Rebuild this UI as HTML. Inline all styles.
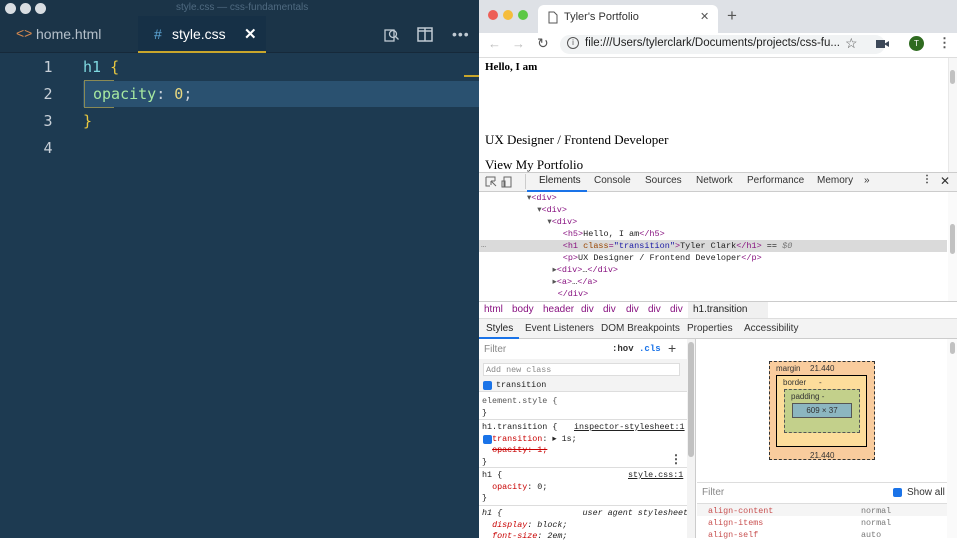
<!DOCTYPE html><html><head><meta charset="utf-8"><style>
*{margin:0;padding:0;box-sizing:border-box}
body{width:957px;height:538px;overflow:hidden;position:relative;font-family:"Liberation Sans",sans-serif;background:#fff}
.a{position:absolute}
.mono{font-family:"Liberation Mono",monospace}
#ed{left:0;top:0;width:479px;height:538px;background:#1d3a51}
.ln{color:#c8d0d8;font-size:15px;left:38px;width:20px;text-align:center}
.code{font-size:15px;font-family:"DejaVu Sans Mono",monospace}
.dt{font-size:8.5px;font-family:"Liberation Mono",monospace;color:#222;white-space:pre}
.ar{color:#555}
.tag{color:#881280}.at{color:#994500}.av{color:#1a1aa6}
.sm{font-size:10px;color:#333}
.st{font-size:8.4px;font-family:"Liberation Mono",monospace;white-space:pre;color:#222}
.pr{color:#c80000}
.bc{position:absolute;top:304px;font-size:10px;color:#881280}
</style></head><body>
<div id="ed" class="a">
 <div class="a" style="left:0;top:0;width:479px;height:16px;background:#1b3448"></div>
 <div class="a" style="left:5px;top:3px;width:11px;height:11px;border-radius:50%;background:#d8dde2"></div>
 <div class="a" style="left:20px;top:3px;width:11px;height:11px;border-radius:50%;background:#d8dde2"></div>
 <div class="a" style="left:35px;top:3px;width:11px;height:11px;border-radius:50%;background:#d8dde2"></div>
 <div class="a" style="left:176px;top:2px;font-size:10px;color:#4f6a80">style.css — css-fundamentals</div>
 <div class="a" style="left:0;top:16px;width:479px;height:37px;background:#1b3448;border-bottom:1px solid #16293a"></div>
 <div class="a" style="left:16px;top:25px;font-size:14px;color:#d88a50">&lt;&gt;</div>
 <div class="a" style="left:36px;top:26px;font-size:14px;color:#b5c0ca">home.html</div>
 <div class="a" style="left:138px;top:16px;width:128px;height:37px;background:#163046;border-bottom:2px solid #c9a62b"></div>
 <div class="a" style="left:154px;top:26px;font-size:14px;color:#5fa8d8">#</div>
 <div class="a" style="left:172px;top:26px;font-size:14px;color:#fff">style.css</div>
 <div class="a" style="left:244px;top:25px;font-size:15px;color:#fff;font-weight:bold">✕</div>
 <svg class="a" style="left:384px;top:27px" width="16" height="16" viewBox="0 0 16 16" fill="none" stroke="#c0cad3" stroke-width="1.3"><rect x="1" y="3" width="9" height="11"/><circle cx="9" cy="7" r="3.5"/><path d="M11.5 9.5l3 3"/></svg>
 <svg class="a" style="left:417px;top:27px" width="16" height="15" viewBox="0 0 16 15" fill="none" stroke="#c0cad3" stroke-width="1.5"><rect x="1" y="1" width="14" height="13"/><path d="M8 1v13M1 4h14"/></svg>
 <div class="a" style="left:452px;top:26px;font-size:14px;color:#c0cad3;letter-spacing:1px">•••</div>
 <div class="a" style="left:83px;top:81px;width:396px;height:26px;background:#2a5170"></div>
 <div class="a" style="left:84px;top:80px;width:30px;height:28px;border-left:1px solid #8a8a55;border-top:1px solid #8a8a55;border-bottom:1px solid #8a8a55"></div>
 <div class="a" style="left:464px;top:75px;width:15px;height:2px;background:#c9a62b"></div>
 <div class="a ln code" style="top:58px">1</div>
 <div class="a ln code" style="top:85px">2</div>
 <div class="a ln code" style="top:112px">3</div>
 <div class="a ln code" style="top:139px">4</div>
 <div class="a code" style="left:83px;top:58px;color:#7fd8e0">h1 <span style="color:#e8c840">{</span></div>
 <div class="a code" style="left:93px;top:85px;color:#a6e8a0">opacity<span style="color:#c8d0d8">:</span> <span style="color:#e8d880">0</span><span style="color:#c8d0d8">;</span></div>
 <div class="a code" style="left:83px;top:112px;color:#e8c840">}</div>
</div>
<!-- chrome -->
<div class="a" style="left:479px;top:0;width:478px;height:33px;background:#dee1e6"></div>
<div class="a" style="left:488px;top:10px;width:10px;height:10px;border-radius:50%;background:#ed5f57"></div>
<div class="a" style="left:503px;top:10px;width:10px;height:10px;border-radius:50%;background:#f5bd3c"></div>
<div class="a" style="left:518px;top:10px;width:10px;height:10px;border-radius:50%;background:#5cc845"></div>
<div class="a" style="left:538px;top:5px;width:180px;height:28px;background:#fff;border-radius:6px 6px 0 0"></div>
<svg class="a" style="left:548px;top:11px" width="10" height="13" viewBox="0 0 10 13" fill="none" stroke="#555"><path d="M1 1h5l3 3v8H1z"/></svg>
<div class="a" style="left:564px;top:11px;font-size:11px;color:#333">Tyler's Portfolio</div>
<div class="a" style="left:700px;top:10px;font-size:11px;color:#555">✕</div>
<div class="a" style="left:727px;top:6px;font-size:17px;color:#555">+</div>
<div class="a" style="left:479px;top:33px;width:478px;height:25px;background:#fff;border-bottom:1px solid #ddd"></div>
<div class="a" style="left:488px;top:36px;font-size:13px;color:#bbb">←</div>
<div class="a" style="left:512px;top:36px;font-size:13px;color:#bbb">→</div>
<div class="a" style="left:537px;top:35px;font-size:14px;color:#555">↻</div>
<div class="a" style="left:560px;top:35px;width:325px;height:19px;border-radius:10px;background:#f1f3f4"></div>
<div class="a" style="left:567px;top:37px;width:12px;height:12px;border:1.3px solid #555;border-radius:50%;font-size:8px;text-align:center;line-height:10px;color:#555">i</div>
<div class="a" style="left:585px;top:37px;font-size:11.5px;color:#222">file:///Users/tylerclark/Documents/projects/css-fu...</div>
<div class="a" style="left:845px;top:35px;font-size:14px;color:#555">☆</div>
<div class="a" style="left:876px;top:40px;width:9px;height:8px;background:#3c4858"></div>
<div class="a" style="left:884px;top:41px;border-right:5px solid #3c4858;border-top:3px solid transparent;border-bottom:3px solid transparent"></div>
<div class="a" style="left:909px;top:36px;width:15px;height:15px;border-radius:50%;background:#2f6b20;color:#fff;font-size:8px;text-align:center;line-height:15px">T</div>
<div class="a" style="left:938px;top:35px;font-size:13px;color:#555;font-weight:bold">⋮</div>
<div class="a" style="left:485px;top:61px;font-family:'Liberation Serif',serif;font-weight:bold;font-size:11px">Hello, I am</div>
<div class="a" style="left:485px;top:132px;font-family:'Liberation Serif',serif;font-size:13px">UX Designer / Frontend Developer</div>
<div class="a" style="left:485px;top:157px;font-family:'Liberation Serif',serif;font-size:13px">View My Portfolio</div>
<div class="a" style="left:948px;top:58px;width:9px;height:114px;background:#f7f7f7;border-left:1px solid #e8e8e8"></div>
<div class="a" style="left:950px;top:70px;width:5px;height:14px;border-radius:3px;background:#c1c1c1"></div>
<!-- devtools -->
<div class="a" style="left:479px;top:172px;width:478px;height:20px;background:#f3f3f3;border-top:1px solid #ccc;border-bottom:1px solid #ccc"></div>
<svg class="a" style="left:485px;top:176px" width="30" height="12" viewBox="0 0 30 12" fill="none" stroke="#666"><path d="M1 1h9v4M1 1v9h4"/><path d="M6 5l5 5M6 5h4M6 5v4"/><rect x="19" y="1" width="7" height="10"/><rect x="17" y="5" width="3" height="6"/></svg>
<div class="a" style="left:525px;top:174px;width:1px;height:15px;background:#ccc"></div>
<div class="a sm" style="left:539px;top:175px;color:#222">Elements</div>
<div class="a" style="left:527px;top:190px;width:60px;height:2px;background:#1a73e8"></div>
<div class="a sm" style="left:594px;top:175px">Console</div>
<div class="a sm" style="left:645px;top:175px">Sources</div>
<div class="a sm" style="left:696px;top:175px">Network</div>
<div class="a sm" style="left:747px;top:175px">Performance</div>
<div class="a sm" style="left:817px;top:175px">Memory</div>
<div class="a sm" style="left:864px;top:175px">»</div>
<div class="a sm" style="left:922px;top:174px;font-weight:bold">⋮</div>
<div class="a sm" style="left:940px;top:174px;font-size:12px">✕</div>
<div class="a" style="left:479px;top:240px;width:468px;height:12px;background:#dadada"></div>
<div class="a dt" style="left:527px;top:192px;line-height:12px"><span class="ar">▾</span><span class="tag">&lt;div&gt;</span>
  <span class="ar">▾</span><span class="tag">&lt;div&gt;</span>
    <span class="ar">▾</span><span class="tag">&lt;div&gt;</span>
       <span class="tag">&lt;h5&gt;</span>Hello, I am<span class="tag">&lt;/h5&gt;</span>
       <span class="tag">&lt;h1 </span><span class="at">class</span><span class="tag">=</span><span class="av">"transition"</span><span class="tag">&gt;</span>Tyler Clark<span class="tag">&lt;/h1&gt;</span> == <i style="color:#777">$0</i>
       <span class="tag">&lt;p&gt;</span>UX Designer / Frontend Developer<span class="tag">&lt;/p&gt;</span>
     <span class="ar">▸</span><span class="tag">&lt;div&gt;</span>…<span class="tag">&lt;/div&gt;</span>
     <span class="ar">▸</span><span class="tag">&lt;a&gt;</span>…<span class="tag">&lt;/a&gt;</span>
      <span class="tag">&lt;/div&gt;</span></div>
<div class="a dt" style="left:481px;top:240px;color:#777">…</div>
<div class="a" style="left:948px;top:192px;width:9px;height:109px;background:#fafafa"></div>
<div class="a" style="left:950px;top:224px;width:5px;height:30px;border-radius:3px;background:#c1c1c1"></div>
<div class="a" style="left:479px;top:301px;width:478px;height:18px;background:#fff;border-top:1px solid #ccc;border-bottom:1px solid #ddd"></div>
<div class="bc" style="left:484px">html</div>
<div class="bc" style="left:512px">body</div>
<div class="bc" style="left:543px">header</div>
<div class="bc" style="left:581px">div</div>
<div class="bc" style="left:603px">div</div>
<div class="bc" style="left:626px">div</div>
<div class="bc" style="left:648px">div</div>
<div class="bc" style="left:670px">div</div>
<div class="a" style="left:688px;top:302px;width:80px;height:16px;background:#f0f0f0"></div>
<div class="a sm" style="left:693px;top:304px;color:#222">h1.transition</div>
<div class="a" style="left:479px;top:319px;width:478px;height:20px;background:#f3f3f3;border-bottom:1px solid #ccc"></div>
<div class="a sm" style="left:486px;top:323px;color:#222">Styles</div>
<div class="a" style="left:479px;top:337px;width:40px;height:2px;background:#1a73e8"></div>
<div class="a sm" style="left:525px;top:323px">Event Listeners</div>
<div class="a sm" style="left:601px;top:323px">DOM Breakpoints</div>
<div class="a sm" style="left:687px;top:323px">Properties</div>
<div class="a sm" style="left:744px;top:323px">Accessibility</div>
<!-- styles -->
<div class="a" style="left:479px;top:339px;width:208px;height:199px;background:#fff"></div>
<div class="a sm" style="left:484px;top:344px;color:#888">Filter</div>
<div class="a mono" style="left:612px;top:344px;font-size:9px;font-weight:bold;color:#333">:hov <span style="color:#1a73e8">.cls</span></div>
<div class="a" style="left:668px;top:340px;font-size:14px;color:#444">+</div>
<div class="a" style="left:479px;top:359px;width:208px;height:33px;background:#f3f3f3;border-bottom:1px solid #ddd"></div>
<div class="a" style="left:483px;top:363px;width:197px;height:13px;background:#fff;border:1px solid #ddd"></div>
<div class="a st" style="left:486px;top:365px;color:#888">Add new class</div>
<div class="a" style="left:483px;top:381px;width:9px;height:9px;border-radius:2px;background:#1a73e8"></div>
<div class="a st" style="left:496px;top:380px">transition</div>
<div class="a st" style="left:482px;top:395px;line-height:12px"><span style="color:#555">element.style {</span>
}</div>
<div class="a" style="left:479px;top:419px;width:208px;height:1px;background:#ddd"></div>
<div class="a st" style="left:482px;top:422px;line-height:11.5px">h1.transition {
  <span class="pr">transition</span>: ▸ 1s;
  <s class="pr">opacity: 1;</s>
}</div>
<div class="a" style="left:483px;top:435px;width:9px;height:9px;border-radius:2px;background:#1a73e8"></div>
<div class="a st" style="left:574px;top:422px;text-decoration:underline">inspector-stylesheet:1</div>
<div class="a" style="left:670px;top:452px;font-size:12px;font-weight:bold;color:#444">⋮</div>
<div class="a" style="left:479px;top:467px;width:208px;height:1px;background:#ddd"></div>
<div class="a st" style="left:482px;top:470px;line-height:11.5px">h1 {
  <span class="pr">opacity</span>: 0;
}</div>
<div class="a st" style="left:628px;top:470px;text-decoration:underline">style.css:1</div>
<div class="a" style="left:479px;top:505px;width:208px;height:1px;background:#ddd"></div>
<div class="a st" style="left:482px;top:508px;line-height:11.5px;font-style:italic">h1 {                user agent stylesheet
  <span class="pr">display</span>: block;
  <span class="pr">font-size</span>: 2em;</div>
<div class="a" style="left:687px;top:339px;width:9px;height:199px;background:#f3f3f3;border-right:1px solid #ccc"></div>
<div class="a" style="left:688px;top:342px;width:6px;height:115px;border-radius:3px;background:#c1c1c1"></div>
<!-- box model -->
<div class="a" style="left:769px;top:361px;width:106px;height:99px;background:#f9cc9d;border:1px dashed #333"></div>
<div class="a" style="left:776px;top:364px;font-size:8px;color:#333">margin</div>
<div class="a" style="left:810px;top:364px;font-size:8px;color:#333">21.440</div>
<div class="a" style="left:776px;top:375px;width:91px;height:72px;background:#fddd9b;border:1px solid #000"></div>
<div class="a" style="left:783px;top:378px;font-size:8px;color:#333">border</div>
<div class="a" style="left:819px;top:378px;font-size:8px;color:#333">-</div>
<div class="a" style="left:784px;top:389px;width:76px;height:44px;background:#c3d08b;border:1px dashed #555"></div>
<div class="a" style="left:791px;top:392px;font-size:8px;color:#333">padding -</div>
<div class="a" style="left:792px;top:403px;width:60px;height:15px;background:#8cb6c0;border:1px solid #555;font-size:8px;text-align:center;line-height:13px;color:#333">609 × 37</div>
<div class="a" style="left:810px;top:451px;font-size:8px;color:#333">21.440</div>
<div class="a" style="left:697px;top:482px;width:260px;height:1px;background:#ddd"></div>
<div class="a sm" style="left:702px;top:487px;color:#888">Filter</div>
<div class="a" style="left:893px;top:488px;width:9px;height:9px;border-radius:2px;background:#1a73e8"></div>
<div class="a sm" style="left:907px;top:487px">Show all</div>
<div class="a" style="left:697px;top:503px;width:250px;height:1px;background:#ddd"></div>
<div class="a" style="left:697px;top:504px;width:250px;height:12px;background:#f5f5f5"></div>
<div class="a st" style="left:708px;top:505px;line-height:12px;color:#c85050">align-content
align-items
align-self</div>
<div class="a st" style="left:861px;top:505px;line-height:12px;color:#777">normal
normal
auto</div>
<div class="a" style="left:947px;top:339px;width:10px;height:199px;background:#fafafa"></div>
<div class="a" style="left:950px;top:342px;width:5px;height:12px;border-radius:3px;background:#c1c1c1"></div>
</body></html>
